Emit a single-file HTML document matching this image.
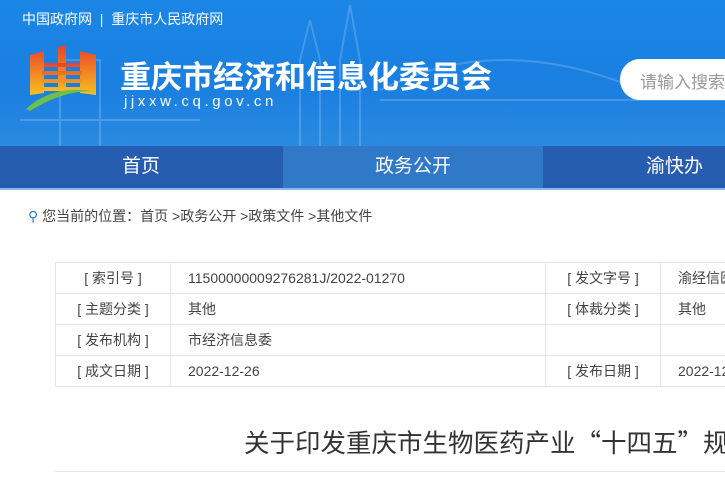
<!DOCTYPE html>
<html><head><meta charset="utf-8"><style>
*{margin:0;padding:0;box-sizing:border-box}
body{width:725px;height:483px;overflow:hidden;background:#fff;font-family:"Liberation Sans","Noto Sans CJK SC",sans-serif;position:relative}
.hd{position:absolute;left:0;top:0;width:725px;height:146px;background:linear-gradient(180deg,#1b86e6 0%,#1a7fe0 60%,#2a8ae0 100%);overflow:hidden}
.top{position:absolute;left:22px;top:9px;color:#fff;font-size:14px}
.title{position:absolute;left:120px;top:52px;color:#fff;font-size:31px;font-weight:bold;white-space:nowrap}
.url{position:absolute;left:124px;top:93px;color:#fff;font-size:15px;letter-spacing:3.6px}
.search{position:absolute;left:620px;top:59px;width:140px;height:41px;background:#fff;border-radius:20px;color:#999;font-size:17px;padding:9px 0 0 20px;white-space:nowrap}
.nav{position:absolute;left:0;top:146px;width:725px;height:44px;background:#275db0;border-bottom:2px solid #8ab8ea}
.nav div{position:absolute;top:0;height:42px;line-height:42px;color:#fff;font-size:19px;text-align:center}
.bc{position:absolute;left:28px;top:206px;font-size:14px;color:#444;white-space:nowrap}
table{position:absolute;left:55px;top:262px;border-collapse:collapse;font-size:14px;color:#444;table-layout:fixed;width:700px}
td{border:1px solid #e5e5e5;height:31px;padding:0;white-space:nowrap;overflow:hidden}
.k{text-align:center}
.v{padding-left:17px}
.h1{position:absolute;left:244px;top:423px;font-size:25.5px;color:#333;white-space:nowrap;font-family:"Noto Sans CJK SC",sans-serif}
.line{position:absolute;left:55px;top:471px;width:670px;height:1px;background:#e5e5e5}
</style></head><body>
<div class="hd">
<svg width="725" height="146" style="position:absolute;left:0;top:0" fill="none" stroke="rgba(255,255,255,0.18)" stroke-width="2">
<path d="M300 146V60L310 20L320 60V146M340 146V60L350 5L360 60V146"/>
<path d="M380 90Q500 30 640 90M380 100H725"/>
<path d="M60 146V60H100V146M20 120H200"/>
</svg>
<div class="top">中国政府网 &nbsp;|&nbsp; 重庆市人民政府网</div>
<svg width="80" height="72" style="position:absolute;left:22px;top:44px" viewBox="0 0 80 70">
<defs><linearGradient id="g" x1="0" y1="0" x2="0" y2="1"><stop offset="0" stop-color="#e8402a"/><stop offset="1" stop-color="#f8c020"/></linearGradient></defs>
<path d="M8 10L22 6V48L8 50Z M36 2L44 0V46L36 46Z M58 6L74 10V50L58 48Z" fill="url(#g)"/>
<path d="M22 18H58V22H22Z M20 26H60V30H20Z M20 34H60V38H20Z M22 42H58V46H22Z" fill="url(#g)"/>
<path d="M4 64Q30 40 70 46Q40 46 8 66Z" fill="#6cc04a"/>
</svg>
<div class="title">重庆市经济和信息化委员会</div>
<div class="url">jjxxw.cq.gov.cn</div>
<div class="search">请输入搜索</div>
</div>
<div class="nav">
<div style="left:0;width:282px">首页</div>
<div style="left:283px;width:260px;background:#3078c8">政务公开</div>
<div style="left:544px;width:260px;text-align:left;padding-left:102px">渝快办</div>
</div>
<div class="bc"><span style="color:#2a7ad8">&#9906;</span> 您当前的位置：首页 &gt;政务公开 &gt;政策文件 &gt;其他文件</div>
<table>
<colgroup><col style="width:115px"><col style="width:375px"><col style="width:115px"><col style="width:95px"></colgroup>
<tr><td class="k">[ 索引号 ]</td><td class="v">11500000009276281J/2022-01270</td><td class="k">[ 发文字号 ]</td><td class="v">渝经信医</td></tr>
<tr><td class="k">[ 主题分类 ]</td><td class="v">其他</td><td class="k">[ 体裁分类 ]</td><td class="v">其他</td></tr>
<tr><td class="k">[ 发布机构 ]</td><td class="v">市经济信息委</td><td></td><td></td></tr>
<tr><td class="k">[ 成文日期 ]</td><td class="v">2022-12-26</td><td class="k">[ 发布日期 ]</td><td class="v">2022-12-28</td></tr>
</table>
<div class="h1">关于印发重庆市生物医药产业“十四五”规划</div>
<div class="line"></div>
</body></html>
